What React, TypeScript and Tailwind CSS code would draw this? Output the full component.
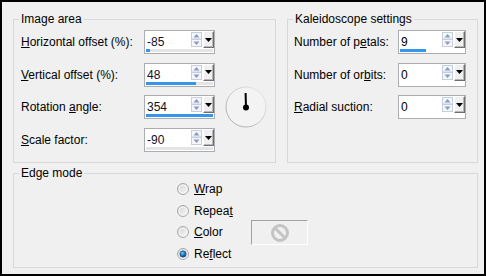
import React from 'react';

interface SpinBoxProps {
  value: string;
  boxClass: string;
  fill: number;
  track?: boolean;
  textClass?: string;
}

const SpinArrows: React.FC = () => (
  <div className="flex flex-col w-[11px] h-[15px] mt-[1px] mr-[1px]">
    <svg width="11" height="7" viewBox="0 0 11 7" className="block">
      <rect x="0.5" y="0.5" width="10" height="6.5" fill="#f4f6fa" stroke="#c8cfdc" />
      <path d="M2.5 5.5 L5.5 2 L8.5 5.5 Z" fill="#8c9bc6" />
    </svg>
    <svg width="11" height="8" viewBox="0 0 11 8" className="block">
      <rect x="0.5" y="0.5" width="10" height="7" fill="#f4f6fa" stroke="#c8cfdc" />
      <path d="M2.5 2.5 L5.5 6 L8.5 2.5 Z" fill="#8c9bc6" />
    </svg>
  </div>
);

const DropButton: React.FC = () => (
  <div className="flex items-center justify-center w-[11px] h-[17px] bg-[#f0f0f0] border-t border-l border-t-white border-l-white border-r border-b border-r-[#6f6f6f] border-b-[#6f6f6f] shadow-[inset_-1px_-1px_0_#b8b8b8]">
    <svg width="7" height="4" viewBox="0 0 7 4">
      <path d="M0 0 L7 0 L3.5 4 Z" fill="#000" />
    </svg>
  </div>
);

const SpinBox: React.FC<SpinBoxProps> = ({ value, boxClass, fill, track = true, textClass = 'text-black' }) => (
  <div className={`flex flex-col h-[24px] border border-[#abadb3] bg-white ${boxClass}`}>
    <div className="flex h-[18px] items-start">
      <div className={`flex-1 pl-[2px] pt-[4px] leading-[14px] text-[12px] ${textClass}`}>{value}</div>
      <SpinArrows />
      <DropButton />
    </div>
    <div className={`h-[3px] mx-[1px] ${track ? 'bg-[#e4e4e4]' : 'bg-white'}`}>
      <div className="h-full bg-[#3396ec]" style={{ width: fill }} />
    </div>
  </div>
);

const Dial: React.FC = () => (
  <svg width="42" height="42" viewBox="0 0 42 42">
    <defs>
      <linearGradient id="dialEdge" x1="1" y1="0" x2="0" y2="1">
        <stop offset="0" stopColor="#ececec" />
        <stop offset="1" stopColor="#a4a4a4" />
      </linearGradient>
    </defs>
    <circle cx="21" cy="21" r="20" fill="#f3f3f3" stroke="url(#dialEdge)" strokeWidth="1" />
    <line x1="21" y1="21.5" x2="20.6" y2="7" stroke="#000" strokeWidth="2" />
    <circle cx="21" cy="21.5" r="3" fill="#000" />
  </svg>
);

const Radio: React.FC<{ checked?: boolean }> = ({ checked }) => (
  <svg width="12" height="12" viewBox="0 0 12 12" className="shrink-0">
    <defs>
      <linearGradient id="radioFill" x1="0" y1="0" x2="1" y2="1">
        <stop offset="0" stopColor="#d2d2d2" />
        <stop offset="1" stopColor="#fbfbfb" />
      </linearGradient>
      <radialGradient id="radioDot" cx="0.4" cy="0.35" r="0.7">
        <stop offset="0" stopColor="#7cc4f4" />
        <stop offset="0.6" stopColor="#1a6fb5" />
        <stop offset="1" stopColor="#0c3e6e" />
      </radialGradient>
    </defs>
    <circle cx="6" cy="6" r="5.5" fill="url(#radioFill)" stroke="#a9a9a9" />
    <circle cx="6" cy="6" r="4" fill="none" stroke="#f6f6f6" strokeWidth="1" />
    {checked && <circle cx="6" cy="6" r="3.2" fill="url(#radioDot)" stroke="#174a73" strokeWidth="0.6" />}
  </svg>
);

const RadioRow: React.FC<{ checked?: boolean; children: React.ReactNode }> = ({ checked, children }) => (
  <div className="flex items-center gap-[5px] h-[21.7px]">
    <Radio checked={checked} />
    <span>{children}</span>
  </div>
);

const App: React.FC = () => {
  return (
    <div className="w-[486px] h-[276px] border-2 border-black bg-[#f0f0f0] pl-[11px] pt-[11px] font-['Liberation_Sans',Arial,sans-serif] text-[12px] text-black">
      <div className="flex gap-[11px]">
        <fieldset className="w-[263px] h-[150px] border border-[#d3d9dd]">
          <legend className="ml-[5px] px-[2px] leading-[12px]">Image area</legend>
          <div className="grid grid-cols-[123px_71px_auto] auto-rows-[24px] gap-y-[8.7px] items-center pl-[7px] mt-[5px]">
            <span><u>H</u>orizontal offset (%):</span>
            <SpinBox value="-85" boxClass="w-[71px]" fill={4} textClass="text-[#10102a]" />
            <span />
            <span><u>V</u>ertical offset (%):</span>
            <SpinBox value="48" boxClass="w-[71px]" fill={50} textClass="text-[#10102a]" />
            <span />
            <span>Rotation <u>a</u>ngle:</span>
            <SpinBox value="354" boxClass="w-[71px]" fill={67} textClass="text-[#10102a]" />
            <div className="flex h-[24px] items-center ml-[10px]">
              <Dial />
            </div>
            <span><u>S</u>cale factor:</span>
            <SpinBox value="-90" boxClass="w-[71px]" fill={0} textClass="text-[#10102a]" />
            <span />
          </div>
        </fieldset>

        <fieldset className="w-[191px] h-[150px] border border-[#d3d9dd]">
          <legend className="ml-[5px] px-[2px] leading-[12px]">Kaleidoscope settings</legend>
          <div className="grid grid-cols-[104px_68px] auto-rows-[24px] gap-y-[8.7px] items-center pl-[6px] mt-[5px]">
            <span>Number of p<u>e</u>tals:</span>
            <SpinBox value="9" boxClass="w-[68px]" fill={26} track={false} />
            <span>Number of or<u>b</u>its:</span>
            <SpinBox value="0" boxClass="w-[68px]" fill={0} track={false} />
            <span><u>R</u>adial suction:</span>
            <SpinBox value="0" boxClass="w-[68px]" fill={0} track={false} />
          </div>
        </fieldset>
      </div>

      <fieldset className="mt-[4px] w-[465px] h-[101px] border border-[#d3d9dd]">
        <legend className="ml-[5px] px-[2px] leading-[12px]">Edge mode</legend>
        <div className="flex pl-[163px] -mt-[1px]">
          <div className="flex flex-col w-[74px]">
            <RadioRow><u>W</u>rap</RadioRow>
            <RadioRow>Repea<u>t</u></RadioRow>
            <RadioRow><u>C</u>olor</RadioRow>
            <RadioRow checked>Re<u>f</u>lect</RadioRow>
          </div>
          <div className="mt-[42px] w-[57px] h-[25px] border border-[#a0a0a0] border-r-white border-b-white bg-[#f0f0f0] flex items-center justify-center">
            <svg width="20" height="20" viewBox="0 0 20 20">
              <circle cx="10" cy="10" r="7.5" fill="none" stroke="#c4c4c4" strokeWidth="3" />
              <line x1="5" y1="5" x2="15" y2="15" stroke="#c4c4c4" strokeWidth="3" />
            </svg>
          </div>
        </div>
      </fieldset>
    </div>
  );
};

export default App;
